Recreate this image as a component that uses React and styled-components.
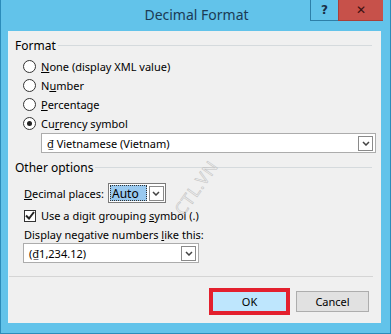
import React from "react";
import styled, { createGlobalStyle } from "styled-components";

const Global = createGlobalStyle`
  html, body { margin: 0; padding: 0; }
  body { font-family: "Segoe UI", "Noto Sans", "Liberation Sans", sans-serif; font-size: 11px; color: #000; }
`;

const Frame = styled.div`
  width: 391px;
  height: 334px;
  box-sizing: border-box;
  background: #62c3ea;
  border: 1px solid #2b8cba;
  border-top: none;
  display: flex;
  flex-direction: column;
  padding: 0 9px 10px 7px;
`;

const TitleBar = styled.div`
  height: 31px;
  flex-shrink: 0;
  display: flex;
  align-items: flex-start;
  position: relative;
`;

const Title = styled.div`
  position: absolute;
  left: 0;
  right: 0;
  top: 5px;
  text-align: center;
  font-size: 14px;
  color: #1b3b55;
  padding-left: 4px;
`;

const Caption = styled.div`
  margin-left: auto;
  display: flex;
  margin-right: -2px;
`;

const CapBtn = styled.div`
  height: 21px;
  width: ${(p) => p.$w}px;
  box-sizing: border-box;
  display: flex;
  align-items: center;
  justify-content: center;
  font-family: "DejaVu Sans", sans-serif;
  font-weight: bold;
  font-size: 12px;
  color: ${(p) => (p.$close ? "#3a1010" : "#1a2f45")};
  background: ${(p) => (p.$close ? "#c7514a" : "#62c3ea")};
  border-left: 1px solid ${(p) => (p.$close ? "#a8403a" : "#2d7fa8")};
  border-bottom: 1px solid ${(p) => (p.$close ? "#a8403a" : "#2d7fa8")};
`;

const Client = styled.div`
  flex: 1;
  background: #f0f0f0;
  position: relative;
  padding: 6px 6px 0 6px;
  display: flex;
  flex-direction: column;
  border-left: 1px solid #e8f5fb;
`;

const GroupHead = styled.div`
  display: flex;
  align-items: center;
  height: 16px;
  gap: 2px;
  font-size: 12px;
  &::after {
    content: "";
    flex: 1;
    height: 1px;
    background: #d5dadd;
    margin-right: 3px;
  }
`;

const Options = styled.div`
  display: flex;
  flex-direction: column;
  align-items: flex-start;
  padding: 4px 0 0 8px;
`;

const Row = styled.label`
  display: flex;
  align-items: center;
  height: 19px;
  gap: 5px;
`;

const Radio = styled.span`
  width: 11px;
  height: 11px;
  border-radius: 50%;
  border: 1px solid #333;
  background: #fff;
  display: flex;
  align-items: center;
  justify-content: center;
  &::after {
    content: "";
    display: ${(p) => (p.$on ? "block" : "none")};
    width: 5px;
    height: 5px;
    border-radius: 50%;
    background: #222;
  }
`;

const U = styled.span`
  text-decoration: underline;
`;

const Select = styled.div`
  box-sizing: border-box;
  height: 20px;
  width: ${(p) => p.$w}px;
  flex-shrink: 0;
  margin-left: ${(p) => p.$ml || 0}px;
  border: 1px solid #acacac;
  background: #fff;
  display: flex;
  align-items: center;
  padding-left: 3px;
  padding-right: 2px;
`;

const SelText = styled.span`
  flex: 1;
  padding-left: 2px;
  white-space: nowrap;
`;

const Arrow = styled.span`
  width: 15px;
  height: 15px;
  box-sizing: border-box;
  border: 1px solid #8a8a8a;
  display: flex;
  align-items: center;
  justify-content: center;
  background: #fff;
`;

const Chevron = () => (
  <Arrow>
    <svg width="8" height="5" viewBox="0 0 8 5">
      <path d="M1 1 L4 4 L7 1" fill="none" stroke="#444" strokeWidth="1.5" />
    </svg>
  </Arrow>
);

const Other = styled.div`
  display: flex;
  flex-direction: column;
  align-items: flex-start;
  padding: 6px 0 0 9px;
`;

const Line = styled.div`
  display: flex;
  align-items: center;
  height: ${(p) => p.$h || 22}px;
  gap: ${(p) => p.$gap || 0}px;
`;

const AutoBox = styled.div`
  box-sizing: border-box;
  width: 58px;
  height: 20px;
  border: 1px solid #7a7a7a;
  background: #fff;
  display: flex;
  align-items: center;
  padding: 1px;
  gap: 2px;
`;

const Highlight = styled.span`
  flex: 1;
  height: 100%;
  box-sizing: border-box;
  background: #99c9ef;
  border: 1px dotted #333;
  padding-left: 1px;
  display: flex;
  align-items: center;
  font-size: 12px;
`;

const Check = styled.span`
  width: 12px;
  height: 12px;
  box-sizing: border-box;
  border: 1px solid #333;
  background: #fff;
  display: flex;
  align-items: center;
  justify-content: center;
`;

const Sep = styled.div`
  height: 1px;
  background: #d5d5d5;
  margin: 13px 2px 0 -6px;
`;

const Buttons = styled.div`
  display: flex;
  justify-content: flex-end;
  gap: 9px;
  padding: 14px 6px 0 0;
`;

const Button = styled.div`
  box-sizing: border-box;
  width: ${(p) => p.$w}px;
  height: 21px;
  display: flex;
  align-items: center;
  justify-content: center;
  background: ${(p) => (p.$primary ? "#bee6fd" : "#e1e1e1")};
  border: 1px solid ${(p) => (p.$primary ? "#3c7fb1" : "#adadad")};
  outline: ${(p) => (p.$marked ? "4px solid #e3202e" : "none")};
  outline-offset: -1px;
`;

const Watermark = styled.span`
  position: absolute;
  left: 156px;
  top: 145px;
  transform: rotate(-55deg);
  font-size: 17px;
  letter-spacing: 1px;
  color: transparent;
  -webkit-text-stroke: 0.6px #c4c4c4;
  pointer-events: none;
`;

export default function App() {
  return (
    <>
      <Global />
      <Frame>
        <TitleBar>
          <Title>Decimal Format</Title>
          <Caption>
            <CapBtn $w={28}>?</CapBtn>
            <CapBtn $w={45} $close>✕</CapBtn>
          </Caption>
        </TitleBar>
        <Client>
          <GroupHead>Format</GroupHead>
          <Options>
            <Row>
              <Radio />
              <span>
                <U>N</U>one (display XML value)
              </span>
            </Row>
            <Row>
              <Radio />
              <span>
                N<U>u</U>mber
              </span>
            </Row>
            <Row>
              <Radio />
              <span>
                <U>P</U>ercentage
              </span>
            </Row>
            <Row>
              <Radio $on />
              <span>
                Cu<U>r</U>rency symbol
              </span>
            </Row>
            <Select $w={335} $ml={18}>
              <SelText>₫ Vietnamese (Vietnam)</SelText>
              <Chevron />
            </Select>
          </Options>
          <GroupHead style={{ marginTop: 6 }}>Other options</GroupHead>
          <Other>
            <Line $h={24} $gap={4}>
              <span>
                <U>D</U>ecimal places:
              </span>
              <AutoBox>
                <Highlight>Auto</Highlight>
                <Chevron />
              </AutoBox>
            </Line>
            <Line $h={21} $gap={5}>
              <Check>
                <svg width="10" height="9" viewBox="0 0 10 9">
                  <path d="M1 4.5 L4 7.5 L9 1" fill="none" stroke="#222" strokeWidth="2" />
                </svg>
              </Check>
              <span>
                Use a digit grouping <U>s</U>ymbol (.)
              </span>
            </Line>
            <Line $h={17}>
              <span>
                Display negative numbers <U>l</U>ike this:
              </span>
            </Line>
            <Select $w={176} $ml={-1}>
              <SelText>(₫1,234.12)</SelText>
              <Chevron />
            </Select>
          </Other>
          <Sep />
          <Buttons>
            <Button $w={75} $primary $marked>
              OK
            </Button>
            <Button $w={73}>Cancel</Button>
          </Buttons>
          <Watermark>CTL.VN</Watermark>
        </Client>
      </Frame>
    </>
  );
}
